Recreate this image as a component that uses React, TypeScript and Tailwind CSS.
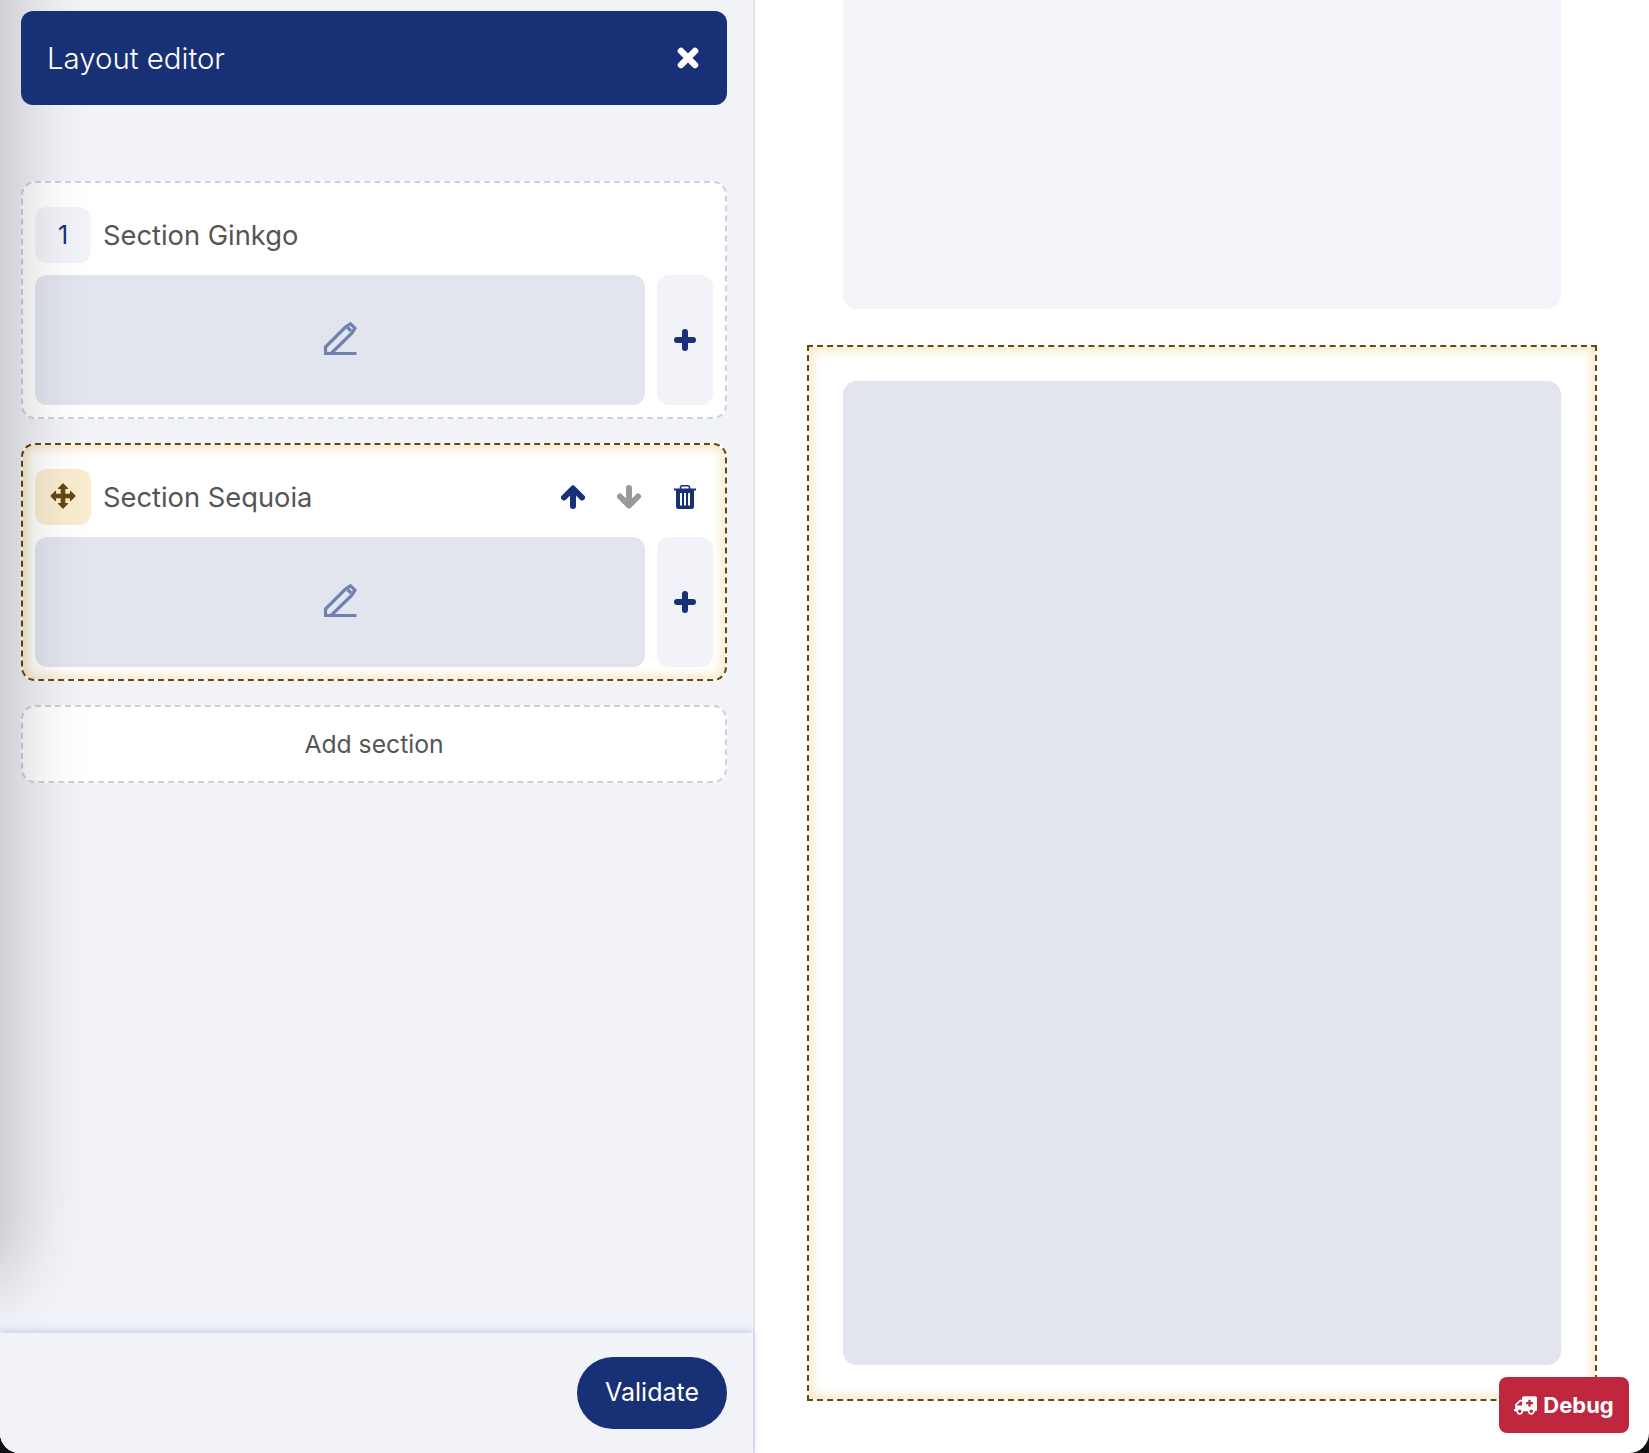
import { FaAmbulance } from "react-icons/fa";

const Pencil = () => (
  <svg width="34" height="34" viewBox="0 0 34 34" fill="none" stroke="#7080b0" strokeWidth="3.2">
    <path d="M2.5 31V25L22.5 5L27.5 1.8L32 6.2L28.8 11.2L8.5 31" strokeLinejoin="miter" />
    <path d="M1 31.5H33.5" />
    <path d="M24.5 5.5L28 9" />
  </svg>
);

const Plus = ({ className }: { className: string }) => (
  <svg className={className} width="22" height="22" viewBox="0 0 22 22" fill="none" stroke="currentColor" strokeWidth="6" strokeLinecap="round">
    <path d="M11 3V19M3 11H19" />
  </svg>
);

const Cross = () => (
  <svg className="text-white" width="22" height="22" viewBox="0 0 22 22" fill="none" stroke="currentColor" strokeWidth="6.5" strokeLinecap="round">
    <path d="M4 4L18 18M18 4L4 18" />
  </svg>
);

const Arrow = ({ className }: { className: string }) => (
  <svg className={className} width="24" height="24" viewBox="0 0 24 24" fill="none" stroke="currentColor" strokeWidth="6" strokeLinecap="round" strokeLinejoin="round">
    <path d="M12 21V4M3 12.5L12 3.5L21 12.5" />
  </svg>
);

const Move = () => (
  <svg width="26" height="26" viewBox="0 0 26 26" fill="currentColor" stroke="currentColor" strokeWidth="1.2" strokeLinejoin="round">
    <path d="M13 1L17.5 5.5H8.5ZM13 25L8.5 20.5H17.5ZM1 13L5.5 8.5V17.5ZM25 13L20.5 17.5V8.5Z" />
    <path d="M11.3 4H14.7V11.3H22V14.7H14.7V22H11.3V14.7H4V11.3H11.3Z" />
  </svg>
);

const Trash = () => (
  <svg className="text-[#183075]" width="22" height="24" viewBox="0 0 22 24" fill="currentColor">
    <path d="M0 3.5H22V5.5H0Z" />
    <path d="M6.5 4.5V2.5Q6.5 0.8 8.2 0.8H13.8Q15.5 0.8 15.5 2.5V4.5" fill="none" stroke="currentColor" strokeWidth="1.6" />
    <path d="M2 5H20V21.5Q20 24 17.5 24H4.5Q2 24 2 21.5Z" />
    <path d="M6 8H8V20.5H6ZM10 8H12V20.5H10ZM14 8H16V20.5H14Z" fill="#fff" />
  </svg>
);

const EditRow = () => (
  <div className="flex gap-3 mt-3">
    <div className="w-[610px] h-[130px] rounded-[12px] bg-[#e2e5ee] flex items-center justify-center pb-[3px]">
      <Pencil />
    </div>
    <div className="w-[56px] h-[130px] rounded-[12px] bg-[#f1f3f9] flex items-center justify-center">
      <Plus className="text-[#183075]" />
    </div>
  </div>
);

export default function App() {
  return (
    <div className="bg-[#111] w-[1649px] h-[1453px]" style={{ fontFamily: "Inter, sans-serif" }}>
      <div className="relative w-full h-full flex bg-white rounded-b-[20px] overflow-hidden">
        <div className="w-[755px] h-full shrink-0 bg-[#f1f3f9] border-r-2 border-[#e2e5ee] flex flex-col">
          <div className="relative z-10 mt-[11px] mx-[21px] w-[706px] h-[94px] shrink-0 rounded-[12px] bg-[#183075] flex items-center justify-between pl-[26px] pr-[28px]">
            <span className="text-white text-[29.4px] font-light pt-[2px]">Layout editor</span>
            <Cross />
          </div>

          <div className="flex-1 flex flex-col gap-6 px-[21px] pt-[76px]">
            <div className="w-[706px] h-[238px] rounded-[14px] border-2 border-dashed border-[#ccd2dc] bg-white px-3 pt-6">
              <div className="flex items-center gap-3 h-[56px]">
                <div className="w-[56px] h-[56px] rounded-[12px] bg-[#f1f3f9] flex items-center justify-center text-[#183075] text-[25px] pt-[2px]">1</div>
                <span className="text-[#555] text-[27.3px] pt-[2px]">Section Ginkgo</span>
              </div>
              <EditRow />
            </div>

            <div className="w-[706px] h-[238px] rounded-[14px] border-2 border-dashed border-[#65490f] bg-white px-3 pt-6 shadow-[inset_0_0_10px_4px_#f9e9c8]">
              <div className="flex items-center gap-3 h-[56px]">
                <div className="w-[56px] h-[56px] rounded-[12px] bg-[#f9ecd0] flex items-center justify-center text-[#65490f] pb-[2px]">
                  <Move />
                </div>
                <span className="text-[#555] text-[27.3px] pt-[2px]">Section Sequoia</span>
                <div className="ml-auto flex items-center">
                  <div className="w-[56px] flex justify-center"><Arrow className="text-[#183075]" /></div>
                  <div className="w-[56px] flex justify-center"><Arrow className="text-[#999] rotate-180" /></div>
                  <div className="w-[56px] flex justify-center"><Trash /></div>
                </div>
              </div>
              <EditRow />
            </div>

            <div className="w-[706px] h-[78px] rounded-[14px] border-2 border-dashed border-[#ccd2dc] bg-white flex items-center justify-center text-[#555] text-[24.7px] pt-[2px]">
              Add section
            </div>
          </div>

          <div className="h-[120px] shrink-0 bg-[#f1f3f9] shadow-[0_-2px_8px_rgba(130,140,190,0.35)] flex items-center justify-end pr-[26px]">
            <button className="w-[150px] h-[72px] rounded-full bg-[#183075] text-white text-[25px]">Validate</button>
          </div>
        </div>

        <div className="flex-1 px-[52px]">
          <div className="mx-[36px] h-[309px] rounded-b-[14px] bg-[#f3f4f9]" />
          <div className="mt-[36px] h-[1056px] border-2 border-dashed border-[#65490f] bg-white p-[34px] shadow-[inset_0_0_10px_4px_#f9e9c8]">
            <div className="h-[984px] rounded-[14px] bg-[#e2e5ee]" />
          </div>
        </div>

        <button className="absolute left-[1499px] top-[1377px] w-[130px] h-[56px] rounded-[8px] bg-[#be273e] flex items-center justify-center gap-[6px] text-white text-[22px] font-bold">
          <FaAmbulance className="text-[23px] -scale-x-100" />
          Debug
        </button>

        <div className="absolute left-[-70px] top-[-100px] w-[70px] h-[1370px] rounded-[40px] pointer-events-none shadow-[0_0_70px_20px_rgba(0,0,0,0.2)]" />
      </div>
    </div>
  );
}
